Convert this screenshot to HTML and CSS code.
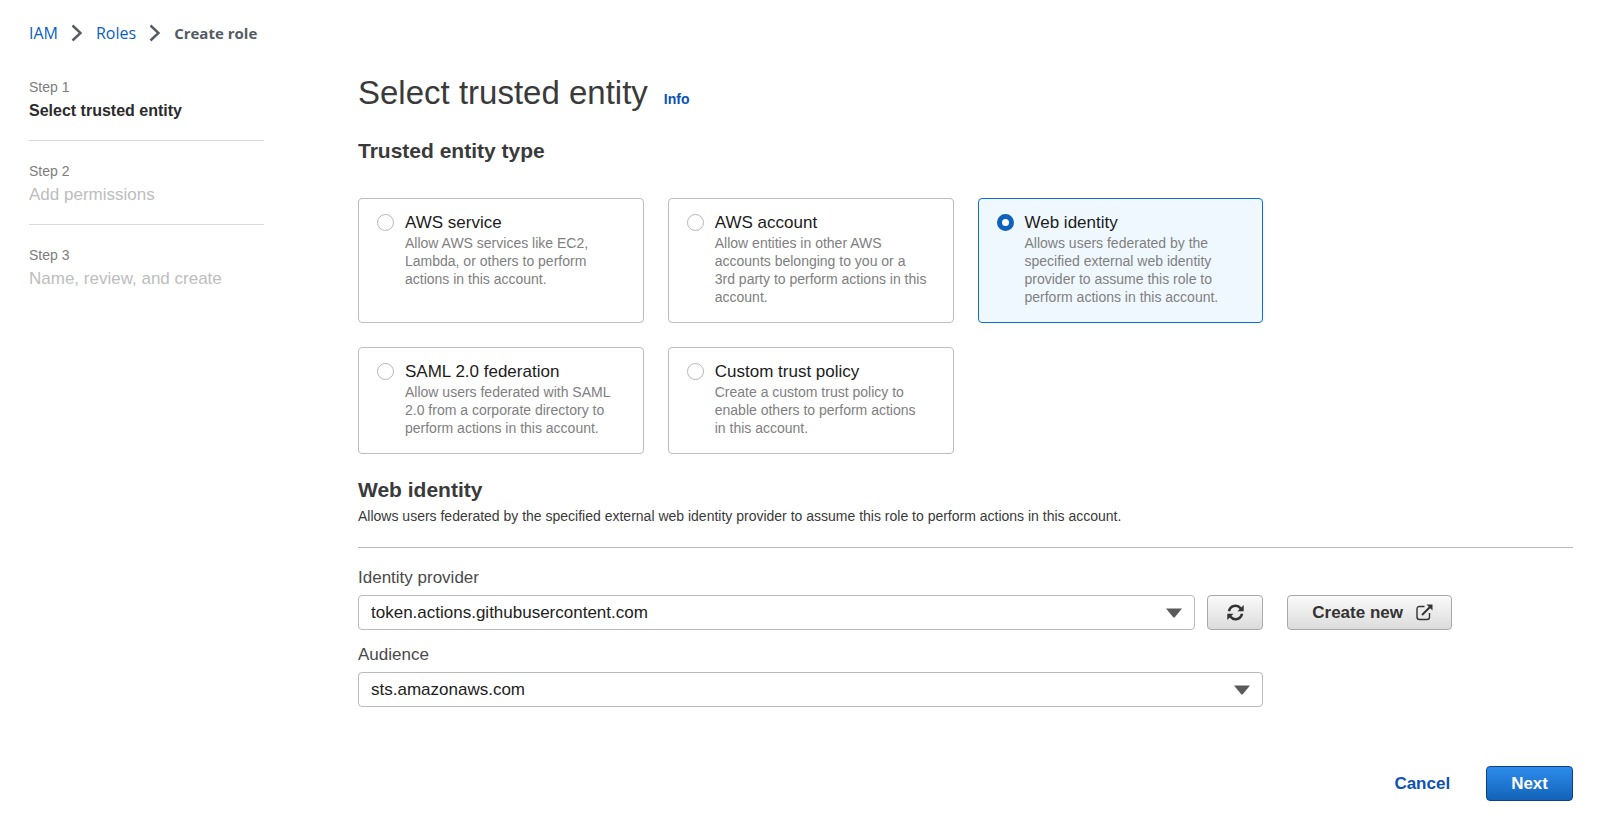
FILE: index.html
```html
<!DOCTYPE html>
<html lang="en">
<head>
<meta charset="utf-8">
<meta name="viewport" content="width=device-width, initial-scale=1">
<title>Create role</title>
<link rel="stylesheet" href="styles.css">
</head>
<body>
<nav class="breadcrumb" aria-label="Breadcrumb">
  <a href="#iam">IAM</a>
  <svg class="chevron" viewBox="0 0 12 18" aria-hidden="true"><path d="M1.500 1.500 9.500 9l-8 7.500"/></svg>
  <a href="#roles">Roles</a>
  <svg class="chevron" viewBox="0 0 12 18" aria-hidden="true"><path d="M1.500 1.500 9.500 9l-8 7.500"/></svg>
  <span class="current" aria-current="page">Create role</span>
</nav>
<div class="layout">
  <ol class="steps">
    <li class="step active"><span class="step-number">Step 1</span><span class="step-title">Select trusted entity</span></li>
    <li class="step"><span class="step-number">Step 2</span><span class="step-title">Add permissions</span></li>
    <li class="step"><span class="step-number">Step 3</span><span class="step-title">Name, review, and create</span></li>
  </ol>
  <main class="content">
    <header class="page-header">
      <h1>Select trusted entity</h1>
      <a class="info" href="#info">Info</a>
    </header>
    <section>
      <h2 id="type-heading">Trusted entity type</h2>
      <div class="columns">
        <div class="cards" role="radiogroup" aria-labelledby="type-heading">
          <label class="card">
            <input type="radio" name="entity">
            <span class="card-text"><span class="card-title">AWS service</span><span class="card-desc">Allow AWS services like EC2, Lambda, or others to perform actions in this account.</span></span>
          </label>
          <label class="card">
            <input type="radio" name="entity">
            <span class="card-text"><span class="card-title">AWS account</span><span class="card-desc">Allow entities in other AWS accounts belonging to you or a 3rd party to perform actions in this account.</span></span>
          </label>
          <label class="card">
            <input type="radio" name="entity" checked>
            <span class="card-text"><span class="card-title">Web identity</span><span class="card-desc">Allows users federated by the specified external web identity provider to assume this role to perform actions in this account.</span></span>
          </label>
          <label class="card">
            <input type="radio" name="entity">
            <span class="card-text"><span class="card-title">SAML 2.0 federation</span><span class="card-desc">Allow users federated with SAML 2.0 from a corporate directory to perform actions in this account.</span></span>
          </label>
          <label class="card">
            <input type="radio" name="entity">
            <span class="card-text"><span class="card-title">Custom trust policy</span><span class="card-desc">Create a custom trust policy to enable others to perform actions in this account.</span></span>
          </label>
        </div>
      </div>
    </section>
    <section class="web-identity">
      <h2>Web identity</h2>
      <p class="section-desc">Allows users federated by the specified external web identity provider to assume this role to perform actions in this account.</p>
      <div class="field">
        <label for="provider">Identity provider</label>
        <div class="columns">
          <div class="control">
            <div class="select">
              <select id="provider"><option>token.actions.githubusercontent.com</option></select>
              <svg class="caret" viewBox="0 0 18 10" aria-hidden="true"><path d="M1 .500h16L10 9q-1 1-2 0z"/></svg>
            </div>
            <button class="button refresh" type="button" aria-label="Refresh">
              <svg class="icon" viewBox="0 0 17 17" aria-hidden="true"><path fill="none" stroke="currentColor" stroke-width="2.500" d="M2 7.300A6.600 6.600 0 0 1 13.700 4.400M15 9.700A6.600 6.600 0 0 1 3.300 12.600"/><path fill="currentColor" d="M16.700 1v6.200h-6.200zM.300 16V9.800h6.200z"/></svg>
            </button>
          </div>
          <button class="button create" type="button">Create new
            <svg class="icon" viewBox="0 0 17 17" aria-hidden="true"><path fill="none" stroke="currentColor" stroke-width="1.400" d="M8.500 2.500H3.500q-2.500 0-2.500 2.500v8q0 2.500 2.500 2.500H11q2.500 0 2.500-2.500V9"/><path fill="none" stroke="currentColor" stroke-width="2" d="M6 11 14 3"/><path fill="currentColor" d="M10.500.500h6v6z"/></svg>
          </button>
        </div>
      </div>
      <div class="field">
        <label for="audience">Audience</label>
        <div class="columns">
          <div class="control">
            <div class="select">
              <select id="audience"><option>sts.amazonaws.com</option></select>
              <svg class="caret" viewBox="0 0 18 10" aria-hidden="true"><path d="M1 .500h16L10 9q-1 1-2 0z"/></svg>
            </div>
          </div>
        </div>
      </div>
    </section>
    <footer class="actions">
      <button class="cancel" type="button">Cancel</button>
      <button class="button next" type="submit">Next</button>
    </footer>
  </main>
</div>
</body>
</html>
```
FILE: styles.css
```css
* { box-sizing: border-box; }

body {
  margin: 0;
  padding: 21px 27px 20px 29px;
  background: #fff;
  color: #3a3a3a;
  font-family: "Liberation Sans", Arial, sans-serif;
  font-size: 17px;
  line-height: 24px;
}

h1, h2, p, ol { margin: 0; padding: 0; }
a { color: #0a52b5; text-decoration: none; }
button, select { font: inherit; }

.breadcrumb {
  display: flex;
  align-items: center;
  gap: 13px;
  font-family: "Open Sans", "Noto Sans", sans-serif;
  font-size: 16px;
}
.breadcrumb a { color: #0a5fc0; }
.breadcrumb .current { color: #545b64; font-weight: 700; font-size: 15px; }
.chevron {
  width: 12px;
  height: 18px;
  fill: none;
  stroke: #545b64;
  stroke-width: 2.400;
}

.layout { display: flex; gap: 94px; }

.steps { flex: 0 0 235px; padding-top: 31px; list-style: none; }
.step { display: flex; flex-direction: column; padding-bottom: 17px; }
.step + .step { border-top: 1px solid #d9d9d9; padding-top: 19px; }
.step-number { color: #7d7d7d; font-size: 14px; line-height: 23px; }
.step-title { color: #bdbdbd; }
.active .step-title { color: #2b2b2b; font-weight: 700; font-size: 16px; }

.content { flex: 1; min-width: 0; padding-top: 28px; }
.page-header { display: flex; align-items: baseline; gap: 16px; margin-bottom: 24px; }
h1 { color: #3a3a3a; font-size: 33px; line-height: 40px; font-weight: 400; }
h2 { font-size: 21px; line-height: 28px; }
.info { font-size: 14px; font-weight: 700; }

.columns { display: grid; grid-template-columns: repeat(4, 1fr); column-gap: 24px; }
.cards {
  grid-column: span 3;
  display: grid;
  grid-template-columns: repeat(3, 1fr);
  gap: 24px;
  margin-top: 33px;
}
.card {
  display: flex;
  align-items: flex-start;
  gap: 11px;
  padding: 12px 23px 16px 18px;
  border: 1px solid #bdbdbd;
  border-radius: 4px;
}
.card:has(:checked) { border-color: #0a70d8; background: #f0f8ff; }
.card input {
  appearance: none;
  flex: none;
  width: 17px;
  height: 17px;
  margin: 3px 0 0;
  border: 1px solid #b5b5b5;
  border-radius: 50%;
  background: #fff;
}
.card input:checked { border: 5px solid #0e61bd; }
.card-text { display: flex; flex-direction: column; }
.card-title { color: #1c1c1c; line-height: 23px; }
.card-desc { color: #808080; font-size: 14px; line-height: 18px; }

.web-identity { margin-top: 22px; }
.section-desc {
  margin: 2px 0 18px;
  padding-bottom: 21px;
  border-bottom: 1px solid #b8b8b8;
  font-size: 14px;
  line-height: 20px;
}
.field + .field { margin-top: 13px; }
.field label { display: block; margin-bottom: 5px; color: #4a4a4a; }
.control { grid-column: span 3; display: flex; gap: 12px; }
.select { position: relative; flex: 1; }
.select select {
  appearance: none;
  display: block;
  width: 100%;
  height: 35px;
  padding: 1px 36px 0 12px;
  border: 1px solid #bababa;
  border-radius: 4px;
  background: #fff;
  color: #222;
}
.caret {
  position: absolute;
  top: 13px;
  right: 12px;
  width: 18px;
  height: 10px;
  fill: #5a5a5a;
  pointer-events: none;
}

.button {
  display: flex;
  align-items: center;
  justify-content: center;
  height: 35px;
  border: 1px solid #a9a9a9;
  border-radius: 4px;
  background: linear-gradient(#fafafa, #dcdcdc);
  color: #333;
  font-weight: 700;
}
.icon { width: 17px; height: 17px; }
.refresh { width: 56px; padding: 0; }
.create { justify-self: start; gap: 13px; padding: 0 18px 0 24px; }

.actions {
  display: flex;
  align-items: center;
  justify-content: flex-end;
  gap: 36px;
  margin-top: 59px;
}
.cancel { padding: 0; border: 0; background: none; color: #0a52b5; font-weight: 700; }
.next {
  padding: 0 24px;
  border-color: #0b3f86;
  background: linear-gradient(#2e8cec, #1263b8);
  color: #fff;
}
```
